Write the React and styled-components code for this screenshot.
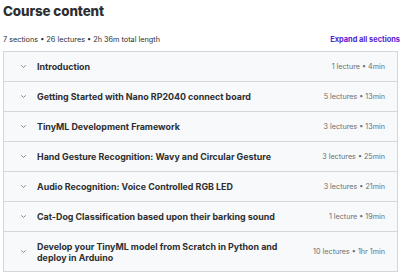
import styled, { createGlobalStyle } from "styled-components";

const GlobalStyle = createGlobalStyle`
  html, body {
    margin: 0;
    padding: 0;
    background: #ffffff;
    overflow: hidden;
  }
  body {
    font-family: "Inter", "Noto Sans", sans-serif;
    color: #2d2f31;
  }
`;

const Page = styled.div`
  width: 400px;
  height: 272px;
  padding: 0 2px 0 3px;
  box-sizing: border-box;
  overflow: hidden;
`;

const Title = styled.h2`
  margin: 0;
  padding-top: 3px;
  font-size: 13.4px;
  line-height: 17px;
  font-weight: 800;
  letter-spacing: -0.1px;
`;

const SummaryBar = styled.div`
  display: flex;
  align-items: center;
  justify-content: space-between;
  height: 20px;
  margin-top: 9px;
  margin-bottom: 2px;
  margin-right: -2px;
`;

const Summary = styled.span`
  font-size: 7.3px;
  color: #2d2f31;
`;

const ExpandButton = styled.button`
  border: none;
  background: none;
  padding: 0;
  font-family: inherit;
  font-size: 7.4px;
  font-weight: 700;
  color: #5624d0;
  white-space: nowrap;
  cursor: pointer;
`;

const Accordion = styled.div`
  border: 1px solid #d1d7dc;
  border-bottom: none;
`;

const Row = styled.div`
  display: flex;
  align-items: center;
  min-height: ${(p) => (p.$tall ? 39 : 29)}px;
  padding: 0 12px 0 16px;
  background: #f7f9fa;
  border-bottom: 1px solid #d1d7dc;
`;

const Chevron = styled.svg`
  width: 7px;
  height: 7px;
  flex: none;
  margin-right: 10px;
  color: #6a6f73;
`;

const SectionTitle = styled.span`
  flex: 1;
  font-size: 8.9px;
  line-height: 11px;
  font-weight: 700;
  max-width: 255px;
`;

const Meta = styled.span`
  margin-left: auto;
  padding-left: 16px;
  font-size: 7.2px;
  color: #6a6f73;
  white-space: nowrap;
`;

const sections = [
  { title: "Introduction", meta: "1 lecture • 4min" },
  { title: "Getting Started with Nano RP2040 connect board", meta: "5 lectures • 13min" },
  { title: "TinyML Development Framework", meta: "3 lectures • 13min" },
  { title: "Hand Gesture Recognition: Wavy and Circular Gesture", meta: "3 lectures • 25min" },
  { title: "Audio Recognition: Voice Controlled RGB LED", meta: "3 lectures • 21min" },
  { title: "Cat-Dog Classification based upon their barking sound", meta: "1 lecture • 19min" },
  {
    title: "Develop your TinyML model from Scratch in Python and deploy in Arduino",
    meta: "10 lectures • 1hr 1min",
    tall: true,
  },
];

const ChevronIcon = () => (
  <Chevron viewBox="0 0 8 8" fill="none">
    <path d="M1.8 3 L4 5.1 L6.2 3" stroke="currentColor" strokeWidth="0.9" strokeLinecap="round" strokeLinejoin="round" />
  </Chevron>
);

const App = () => (
  <Page>
    <GlobalStyle />
    <Title>Course content</Title>
    <SummaryBar>
      <Summary>7 sections • 26 lectures • 2h 36m total length</Summary>
      <ExpandButton>Expand all sections</ExpandButton>
    </SummaryBar>
    <Accordion>
      {sections.map((s) => (
        <Row key={s.title} $tall={s.tall}>
          <ChevronIcon />
          <SectionTitle>{s.title}</SectionTitle>
          <Meta>{s.meta}</Meta>
        </Row>
      ))}
    </Accordion>
  </Page>
);

export default App;
